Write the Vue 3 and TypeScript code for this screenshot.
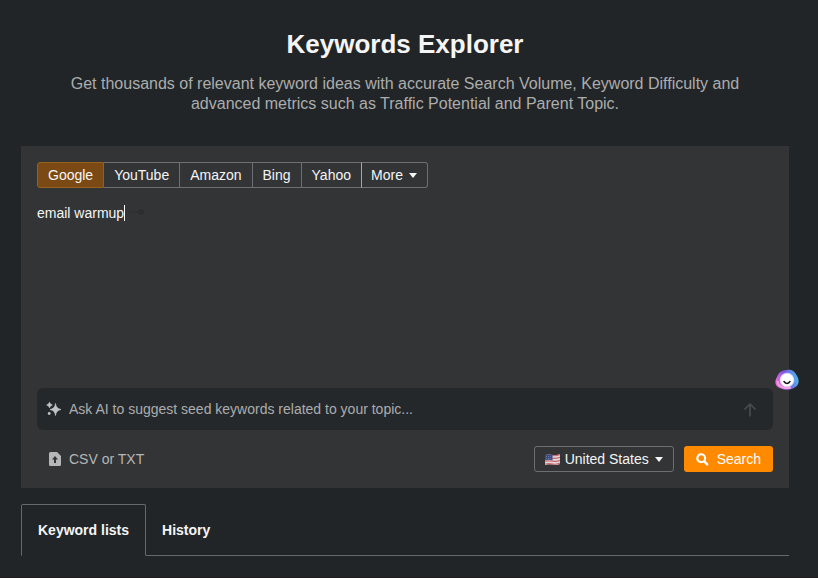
<script setup lang="ts">
import { ref } from 'vue'

const engines: string[] = ['Google', 'YouTube', 'Amazon', 'Bing', 'Yahoo']
const engine = ref('Google')
const keywords = ref('email warmup')
const prompt = ref('')
const country = ref('United States')
const tabs: string[] = ['Keyword lists', 'History']
const activeTab = ref('Keyword lists')
</script>

<template>
  <main class="page">
    <header class="intro">
      <h1>Keywords Explorer</h1>
      <p>Get thousands of relevant keyword ideas with accurate Search Volume, Keyword Difficulty and advanced metrics such as Traffic Potential and Parent Topic.</p>
    </header>

    <form class="panel" @submit.prevent>
      <div class="engines">
        <button
          v-for="name in engines"
          :key="name"
          type="button"
          class="engine"
          :class="{ active: engine === name }"
          @click="engine = name"
        >{{ name }}</button>
        <button type="button" class="engine more">
          More
          <svg class="caret" viewBox="0 0 8 5" aria-hidden="true"><path d="M0 0h8L4 5z" /></svg>
        </button>
      </div>

      <div class="keywords">
        <textarea v-model="keywords" aria-label="Keywords" rows="1" spellcheck="false"></textarea>
        <span class="cursor"></span>
        <svg class="enter" viewBox="0 0 16 10" aria-hidden="true"><path d="M0 4.500h10v1H0z" /><circle cx="12" cy="5" r="3" /></svg>
      </div>

      <div class="ask">
        <svg class="sparkle" viewBox="0 0 16 16" aria-hidden="true">
          <path d="M9.500 2.500Q10 7.700 15 8.500Q10 9.300 9.500 14.500Q9 9.300 4 8.500Q9 7.700 9.500 2.500Z" stroke="currentColor" stroke-width=".7" stroke-linejoin="round" />
          <path d="M3.500 1.200Q4 3.500 6.300 4Q4 4.500 3.500 6.800Q3 4.500.7 4Q3 3.500 3.500 1.200Z" stroke="currentColor" stroke-width=".7" stroke-linejoin="round" />
          <circle cx="3.200" cy="12.500" r="1.400" />
        </svg>
        <input v-model="prompt" type="text" aria-label="Ask AI" placeholder="Ask AI to suggest seed keywords related to your topic..." />
        <button type="button" class="send" aria-label="Send">
          <svg viewBox="0 0 14 16" aria-hidden="true"><path d="M7 15.500V3M1.500 8.500L7 3l5.500 5.500" fill="none" stroke="currentColor" stroke-width="1.700" /></svg>
        </button>
        <button type="button" class="assistant" aria-label="Assistant">
          <svg viewBox="0 0 24 22" aria-hidden="true">
            <defs>
              <linearGradient id="halo" x1="0" y1=".6" x2="1" y2=".4">
                <stop offset="0" stop-color="#f070d8" />
                <stop offset=".45" stop-color="#7950e4" />
                <stop offset="1" stop-color="#48bdf0" />
              </linearGradient>
              <radialGradient id="face">
                <stop offset=".78" stop-color="#fff" />
                <stop offset="1" stop-color="#fff" stop-opacity=".4" />
              </radialGradient>
            </defs>
            <path d="M12 1C17 0 20 3 22 7C25 12 24 17 18 19.500C14 21.500 9 21 6 19.500C0 18 -1 13 2 8C4 3 7 1 12 1Z" fill="url(#halo)" />
            <path d="M2.500 12Q3 17 8 18.500Q12 20 16 18.500" fill="none" stroke="#f6a0e0" stroke-width="2" />
            <ellipse cx="12" cy="11" rx="7.500" ry="7.500" fill="url(#face)" />
            <path d="M9 12.500Q12 16.500 15 12.500" fill="none" stroke="#17131f" stroke-width="1.500" stroke-linecap="round" />
          </svg>
        </button>
      </div>

      <div class="actions">
        <button type="button" class="upload">
          <svg viewBox="0 0 12 14" aria-hidden="true">
            <path fill-rule="evenodd" d="M1.500 0H8l4 4v8.500q0 1.500-1.500 1.500h-9Q0 14 0 12.500v-11Q0 0 1.500 0ZM6 4L3 7.500h2V11h2V7.500h2Z" />
          </svg>
          CSV or TXT
        </button>
        <label class="country">
          <svg class="flag" viewBox="0 0 15 11" aria-hidden="true">
            <path fill="#e3d6dc" d="M0 1q4-1 8 0t7-1v10q-3 1.500-7 .6t-8 .4z" />
            <path fill="none" stroke="#c9686c" stroke-width="1.200" d="M7 1.600q4 .6 8-1M7 4.300q4 .6 8-1M0 7.200q4-.8 8 0t7-1M0 10q4-.8 8 0t7-1" />
            <path fill="#3b4c85" d="M0 1q4-1 7.500-.2v5.400q-3.500-.8-7.500 0z" />
            <path stroke="#8792b8" stroke-width=".7" stroke-dasharray=".8 1.200" d="M1 2.500h6M1 4.500h6" />
          </svg>
          <select v-model="country" aria-label="Country">
            <option>United States</option>
          </select>
          <svg class="caret" viewBox="0 0 8 5" aria-hidden="true"><path d="M0 0h8L4 5z" /></svg>
        </label>
        <button type="submit" class="search">
          <svg viewBox="0 0 13 13" aria-hidden="true"><circle cx="5.200" cy="5.200" r="3.900" fill="none" stroke="currentColor" stroke-width="2.100" /><path d="M8.300 8.300l2.900 3" stroke="currentColor" stroke-width="2.400" stroke-linecap="round" /></svg>
          Search
        </button>
      </div>
    </form>

    <nav class="tabs" role="tablist">
      <button
        v-for="tab in tabs"
        :key="tab"
        type="button"
        role="tab"
        class="tab"
        :class="{ active: activeTab === tab }"
        :aria-selected="activeTab === tab"
        @click="activeTab = tab"
      >{{ tab }}</button>
    </nav>
  </main>
</template>

<style>
body {
  background: #222527;
}
</style>

<style scoped>
.page,
.page * {
  box-sizing: border-box;
}
.page {
  min-height: 100vh;
  padding: 28px 29px 20px 21px;
  border-bottom: 1px solid #21191e;
  color: #f5f5f5;
  font: 14px/20px "Liberation Sans", Arial, sans-serif;
}
button,
input,
textarea,
select {
  margin: 0;
  padding: 0;
  border: 0;
  outline: 0;
  background: none;
  color: inherit;
  font: inherit;
}
svg {
  display: block;
  flex: none;
  fill: currentColor;
}
.intro {
  text-align: center;
}
h1 {
  margin: 0;
  font-size: 26px;
  line-height: 32px;
}
.intro p {
  max-width: 700px;
  margin: 14px auto 32px;
  color: #abadae;
  font-size: 16px;
  line-height: 20px;
}
.panel {
  padding: 16px;
  background: #323436;
}
.engines {
  display: flex;
}
.engine {
  height: 26px;
  padding: 0 10px;
  border: 1px solid #6d7072;
  border-left-width: 0;
}
.engine:first-child {
  border-left-width: 1px;
  border-radius: 3px 0 0 3px;
}
.engine.active {
  border-color: #96601f;
  background: #7b4a14;
}
.more {
  display: flex;
  align-items: center;
  gap: 6px;
  padding: 0 10px 0 9px;
  border-left-width: 1px;
  border-left-color: #a5a7a8;
  border-radius: 0 3px 3px 0;
  margin-left: -1px;
}
.caret {
  width: 8px;
  height: 5px;
}
.keywords {
  display: flex;
  height: 184px;
  margin: 15px 0 1px;
}
.keywords textarea {
  field-sizing: content;
  height: 20px;
  resize: none;
  overflow: hidden;
}
.cursor {
  width: 1px;
  height: 16px;
  margin-top: 2px;
  background: #fff;
}
.enter {
  width: 16px;
  height: 10px;
  margin: 4px 0 0 4px;
  color: #2b2d2f;
}
.ask {
  position: relative;
  display: flex;
  align-items: center;
  height: 42px;
  padding: 0 16px 0 9px;
  border-radius: 6px;
  background: #25282a;
}
.sparkle {
  width: 16px;
  height: 16px;
  margin-right: 7px;
  color: #c0c2c3;
}
.ask input {
  flex: 1;
  min-width: 0;
}
.ask input::placeholder {
  color: #abadae;
  opacity: 1;
}
.send {
  color: #484b4d;
}
.send svg {
  width: 14px;
  height: 16px;
}
.assistant {
  position: absolute;
  top: -19px;
  right: -26px;
}
.assistant svg {
  width: 24px;
  height: 22px;
}
.actions {
  display: flex;
  align-items: center;
  gap: 10px;
  margin-top: 16px;
}
.upload {
  display: flex;
  align-items: center;
  gap: 8px;
  margin-right: auto;
  padding-left: 12px;
  color: #b5b7b8;
}
.upload svg {
  width: 12px;
  height: 14px;
}
.country {
  display: flex;
  align-items: center;
  gap: 5px;
  height: 26px;
  padding: 0 10px;
  border: 1px solid #6d7072;
  border-radius: 3px;
}
.country select {
  appearance: none;
}
.flag {
  width: 15px;
  height: 11px;
}
.search {
  display: flex;
  align-items: center;
  gap: 8px;
  height: 26px;
  padding: 0 12px;
  border-radius: 3px;
  background: #ff8a00;
  color: #fff;
}
.search svg {
  width: 13px;
  height: 13px;
}
.tabs {
  display: flex;
  margin-top: 16px;
  border-bottom: 1px solid #66696b;
}
.tab {
  height: 51px;
  padding: 0 16px;
  font-weight: 700;
}
.tab.active {
  height: 52px;
  margin-bottom: -1px;
  border: 1px solid #66696b;
  border-bottom-color: #222527;
  border-radius: 2px 2px 0 0;
}
</style>
